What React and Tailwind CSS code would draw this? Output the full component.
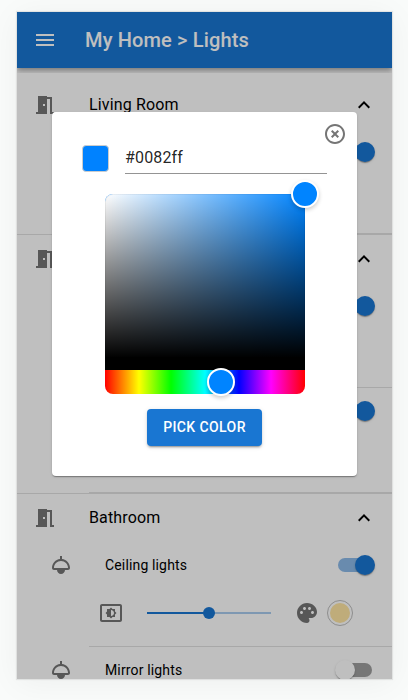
import React from "react";

const ICONS = {
  menu: "M3 18h18v-2H3v2zm0-5h18v-2H3v2zm0-7v2h18V6H3z",
  room: "M14 6v15H3v-2h2V3h9v1h5v15h2v2h-4V6h-3zm-4 5v2h2v-2h-2z",
  less: "m12 8-6 6 1.41 1.41L12 10.83l4.59 4.58L18 14z",
  light:
    "M13 6.06V3h-2v3.06c-4.5.5-8 4.31-8 8.93C3 16.1 3.9 17 5.01 17H8c0 2.21 1.79 4 4 4s4-1.79 4-4h2.99c1.11 0 2.01-.89 2.01-2.01 0-4.62-3.5-8.43-8-8.93zM12 15H5c0-3.86 3.14-7 7-7s7 3.14 7 7h-7z",
  brightness:
    "M21 3H3c-1.1 0-2 .9-2 2v14c0 1.1.9 2 2 2h18c1.1 0 2-.9 2-2V5c0-1.1-.9-2-2-2zm0 16.01H3V4.99h18v14.02zM8 16h2.5l1.5 1.5 1.5-1.5H16v-2.5l1.5-1.5-1.5-1.5V8h-2.5L12 6.5 10.5 8H8v2.5L6.5 12 8 13.5V16zm4-7c1.66 0 3 1.34 3 3s-1.34 3-3 3V9z",
  palette:
    "M12 2C6.49 2 2 6.49 2 12s4.49 10 10 10c1.38 0 2.5-1.12 2.5-2.5 0-.61-.23-1.2-.64-1.67-.08-.1-.13-.21-.13-.33 0-.28.22-.5.5-.5H16c3.31 0 6-2.69 6-6 0-4.96-4.49-9-10-9zm5.5 11c-.83 0-1.5-.67-1.5-1.5s.67-1.5 1.5-1.5 1.5.67 1.5 1.5-.67 1.5-1.5 1.5zm-3-4c-.83 0-1.5-.67-1.5-1.5S13.67 6 14.5 6s1.5.67 1.5 1.5S15.33 9 14.5 9zM5 11.5c0-.83.67-1.5 1.5-1.5s1.5.67 1.5 1.5S7.33 13 6.5 13 5 12.33 5 11.5zm6-4c0 .83-.67 1.5-1.5 1.5S8 8.33 8 7.5 8.67 6 9.5 6s1.5.67 1.5 1.5z",
  close:
    "M14.59 8 12 10.59 9.41 8 8 9.41 10.59 12 8 14.59 9.41 16 12 13.41 14.59 16 16 14.59 13.41 12 16 9.41 14.59 8zM12 2C6.47 2 2 6.47 2 12s4.47 10 10 10 10-4.47 10-10S17.53 2 12 2zm0 18c-4.41 0-8-3.59-8-8s3.59-8 8-8 8 3.59 8 8-3.59 8-8 8z",
};

function Icon({ name, className = "" }) {
  return (
    <svg viewBox="0 0 24 24" className={`size-6 shrink-0 fill-current ${className}`}>
      <path d={ICONS[name]} />
    </svg>
  );
}

function Switch({ on }) {
  return (
    <div className="relative flex h-5 w-10 items-center pl-[3px]">
      <div className={`h-3.5 w-[34px] rounded-full ${on ? "bg-[#1976d2]/50" : "bg-black/38"}`} />
      <div
        className={`absolute top-0 size-5 rounded-full shadow-[0_2px_1px_-1px_rgba(0,0,0,0.2),0_1px_1px_rgba(0,0,0,0.14),0_1px_3px_rgba(0,0,0,0.12)] ${
          on ? "left-5 bg-[#1976d2]" : "left-0 bg-white"
        }`}
      />
    </div>
  );
}

function Light({ name, on = true, color = "bg-[#ffe6a3]" }) {
  return (
    <div>
      <div className="flex h-[46px] items-center pr-[17px] pl-8">
        <Icon name="light" className="text-[#757575]" />
        <span className="ml-8 flex-1 text-sm tracking-[0.15px]">{name}</span>
        <Switch on={on} />
      </div>
      <div className="flex h-[58px] items-center pb-2 pl-[82px]">
        <Icon name="brightness" className="text-[#757575]" />
        <div className="relative ml-6 flex h-3 w-[124px] items-center">
          <div className="h-0.5 w-1/2 bg-[#1976d2]" />
          <div className="h-0.5 w-1/2 bg-[#1976d2]/38" />
          <div className="absolute left-14 size-3 rounded-full bg-[#1976d2]" />
        </div>
        <Icon name="palette" className="ml-6 text-[#757575]" />
        <div className="ml-2 flex size-[26px] items-center justify-center rounded-full border border-[#bdbdbd]">
          <div className={`size-5 rounded-full ${color}`} />
        </div>
      </div>
      <div className="ml-[72px] h-px bg-black/12" />
    </div>
  );
}

function Room({ name, children }) {
  return (
    <div>
      <div className="flex h-12 items-center px-4">
        <Icon name="room" className="text-[#757575]" />
        <span className="ml-8 flex-1 text-base tracking-[0.15px]">{name}</span>
        <Icon name="less" />
      </div>
      {children}
      <div className="h-px bg-black/12" />
    </div>
  );
}

function ColorDialog() {
  return (
    <div className="relative h-[364px] w-[305px] rounded bg-white pt-[33px] shadow-[0_2px_1px_-1px_rgba(0,0,0,0.2),0_1px_1px_rgba(0,0,0,0.14),0_1px_3px_rgba(0,0,0,0.12)]">
      <Icon name="close" className="absolute top-2.5 right-2.5 text-[#757575]" />
      <div className="flex pr-[30px] pl-[30px]">
        <div className="size-[27px] rounded border border-[#ccc] bg-[#0082ff]" />
        <div className="ml-4 h-[29px] flex-1 border-b border-black/42 text-base leading-[25px] tracking-[0.15px] text-black/87">
          #0082ff
        </div>
      </div>
      <div className="mt-5 ml-[53px] flex h-[200px] w-[200px] flex-col">
        <div className="relative flex-1 rounded-t-lg border-b-12 border-black bg-[#0084ff] bg-[linear-gradient(to_top,#000,rgba(0,0,0,0)),linear-gradient(to_right,#fff,rgba(255,255,255,0))] shadow-[inset_0_0_0_1px_rgba(0,0,0,0.05)]">
          <div className="absolute -top-3.5 -right-3.5 size-7 rounded-full border-2 border-white bg-[#0084ff] shadow-[0_2px_4px_rgba(0,0,0,0.2)]" />
        </div>
        <div className="relative h-6 rounded-b-lg bg-[linear-gradient(to_right,#f00_0%,#ff0_17%,#0f0_33%,#0ff_50%,#00f_67%,#f0f_83%,#f00_100%)]">
          <div className="absolute -top-0.5 left-[102px] size-7 rounded-full border-2 border-white bg-[#0084ff] shadow-[0_2px_4px_rgba(0,0,0,0.2)]" />
        </div>
      </div>
      <button className="mt-[15px] ml-[95px] block h-[37px] w-[115px] rounded bg-[#1976d2] pb-0.5 text-sm font-medium tracking-[0.4px] text-white shadow-[0_3px_1px_-2px_rgba(0,0,0,0.2),0_2px_2px_rgba(0,0,0,0.14),0_1px_5px_rgba(0,0,0,0.12)]">
        PICK COLOR
      </button>
    </div>
  );
}

export default function App() {
  return (
    <div className="h-[700px] w-[408px] overflow-hidden bg-[#f9fbfa] pt-3 pl-[17px] font-[Roboto,sans-serif] text-black/87">
      <div className="h-[667px] w-[375px] shadow-[0_0_1px_1px_rgba(0,0,0,0.08),0_4px_30px_rgba(0,0,0,0.05)]">
        <div className="relative h-full overflow-hidden bg-white">
          <div className="flex h-14 items-center bg-[#1976d2] px-4 text-white shadow-[0_2px_4px_-1px_rgba(0,0,0,0.2),0_4px_5px_rgba(0,0,0,0.14),0_1px_10px_rgba(0,0,0,0.12)]">
            <Icon name="menu" />
            <h1 className="ml-7 text-xl font-medium tracking-[0.15px]">My Home &gt; Lights</h1>
          </div>
          <div className="relative mt-[5px] bg-white pt-2 text-black">
            <Room name="Living Room">
              <Light name="" />
            </Room>
            <Room name="">
              <Light name="" />
              <Light name="" />
            </Room>
            <Room name="Bathroom">
              <Light name="Ceiling lights" />
              <Light name="Mirror lights" on={false} />
            </Room>
          </div>
          <div className="absolute inset-0 bg-black/25 pt-[100px] pl-[35px]">
            <ColorDialog />
          </div>
        </div>
      </div>
    </div>
  );
}
